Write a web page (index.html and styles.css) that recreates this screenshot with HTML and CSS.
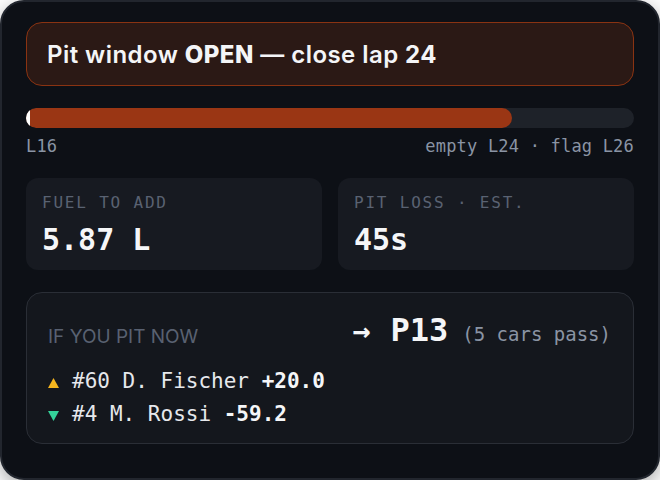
FILE: index.html
```html
<!DOCTYPE html>
<html lang="en">
<head>
<meta charset="utf-8">
<title>Pit strategy</title>
<link rel="stylesheet" href="styles.css">
</head>
<body>
<main class="card">
  <div class="alert">
    <span class="alert-text">Pit window <b class="strong">OPEN</b> — close lap <b class="num">24</b></span>
  </div>

  <div class="fuel-bar">
    <div class="fuel-fill" style="width: 80%"></div>
    <div class="fuel-marker"></div>
  </div>
  <div class="bar-labels">
    <span>L16</span>
    <span>empty L24 · flag L26</span>
  </div>

  <div class="stats">
    <div class="stat">
      <div class="stat-label">FUEL TO ADD</div>
      <div class="stat-value">5.87 L</div>
    </div>
    <div class="stat">
      <div class="stat-label">PIT LOSS · EST.</div>
      <div class="stat-value">45s</div>
    </div>
  </div>

  <section class="projection">
    <div class="proj-head">
      <span class="proj-title">IF YOU PIT NOW</span>
      <span class="proj-result">
        <span class="arrow">→</span>
        <b class="pos">P13</b>
        <span class="pass">(5 cars pass)</span>
      </span>
    </div>
    <ul class="moves">
      <li class="move"><svg class="tri" width="11" height="10" viewBox="0 0 11 10"><path d="M5.5 0 L11 10 L0 10 Z" fill="#f5b51e"/></svg><span>#60 D. Fischer <b>+20.0</b></span></li>
      <li class="move"><svg class="tri" width="11" height="10" viewBox="0 0 11 10"><path d="M0 0 L11 0 L5.5 10 Z" fill="#34d39a"/></svg><span>#4 M. Rossi <b>-59.2</b></span></li>
    </ul>
  </section>
</main>
</body>
</html>
```

FILE: styles.css
```css
* { box-sizing: border-box; }

html, body {
  margin: 0;
  padding: 0;
  background: #ffffff;
}

.card {
  width: 660px;
  height: 480px;
  background: #0d1016;
  border: 2px solid #22262e;
  border-radius: 24px;
  padding: 20px 24px;
  display: flex;
  flex-direction: column;
  box-shadow: 0 6px 20px rgba(0, 0, 0, 0.35);
  font-family: "DejaVu Sans Mono", "Liberation Mono", monospace;
  color: #e6e8ec;
}

.alert {
  height: 64px;
  border: 1px solid #8a3312;
  background: #2b1915;
  border-radius: 16px;
  padding: 0 20px;
  display: flex;
  align-items: center;
}

.alert-text {
  font-family: Inter, "Noto Sans", sans-serif;
  font-size: 24px;
  font-weight: 600;
  color: #f4f5f7;
  letter-spacing: 0.45px;
}

.alert-text .strong { font-weight: 800; }
.alert-text .num { font-weight: 700; }

.fuel-bar {
  position: relative;
  margin-top: 22px;
  height: 20px;
  border-radius: 10px;
  background: #1e2229;
  overflow: hidden;
}

.fuel-fill {
  height: 100%;
  background: #9a3614;
  border-radius: 10px;
}

.fuel-marker {
  position: absolute;
  left: 0;
  top: 0;
  width: 4px;
  height: 100%;
  background: #ffffff;
}

.bar-labels {
  margin-top: 8px;
  display: flex;
  justify-content: space-between;
  font-size: 17px;
  line-height: 20px;
  letter-spacing: 0.2px;
  color: #8a94a4;
}

.stats {
  margin-top: 22px;
  display: grid;
  grid-template-columns: 1fr 1fr;
  gap: 16px;
}

.stat {
  height: 92px;
  background: #171a21;
  border-radius: 12px;
  padding: 15px 16px 0;
}

.stat-label {
  font-size: 16px;
  line-height: 20px;
  letter-spacing: 1.8px;
  color: #5a6272;
}

.stat-value {
  margin-top: 9px;
  font-size: 30px;
  line-height: 36px;
  font-weight: 700;
  color: #f5f6f8;
}

.projection {
  margin-top: 22px;
  height: 152px;
  border: 1px solid #2a2e36;
  background: #14171d;
  border-radius: 16px;
  padding: 18px 22px 0 21px;
}

.proj-head {
  display: flex;
  justify-content: space-between;
  align-items: baseline;
  height: 42px;
}

.proj-title {
  font-family: Inter, "Noto Sans", sans-serif;
  font-size: 19px;
  color: #596171;
  position: relative;
  top: 2px;
}

.proj-result {
  display: flex;
  align-items: baseline;
}

.arrow {
  font-size: 30px;
  font-weight: 700;
  color: #f5f6f8;
  margin-right: 20px;
}

.pos {
  font-size: 32px;
  font-weight: 700;
  color: #f5f6f8;
  margin-right: 14px;
}

.pass {
  font-size: 19px;
  color: #8a94a4;
}

.moves {
  list-style: none;
  margin: 12px 0 0;
  padding: 0;
}

.move {
  font-size: 21px;
  line-height: 33px;
  color: #e6e8ec;
  white-space: nowrap;
}

.move b { font-weight: 700; color: #f5f6f8; }

.tri {
  vertical-align: baseline;
  margin-right: 13px;
}
```
